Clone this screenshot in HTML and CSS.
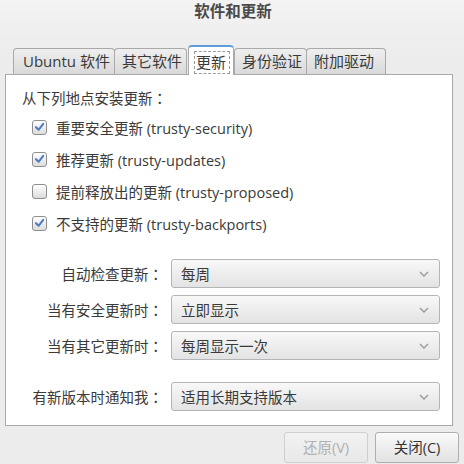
FILE: index.html
```html
<!DOCTYPE html>
<html lang="zh">
<head>
<meta charset="utf-8">
<title>软件和更新</title>
<link rel="stylesheet" href="styles.css">
</head>
<body>
<div class="dialog">
  <div class="title">软件和更新</div>
  <div class="tabs">
    <div class="tab t1">Ubuntu 软件</div>
    <div class="tab t2">其它软件</div>
    <div class="tab active"><span class="focus">更新</span></div>
    <div class="tab t4">身份验证</div>
    <div class="tab t5">附加驱动</div>
  </div>
  <div class="panel">
    <div class="heading">从下列地点安装更新<span class="colon" lang="zh-TW">：</span></div>
    <ul class="checks">
      <li><span class="cb"><svg viewBox="0 0 14 14" width="14" height="14"><path d="M3.2 7.2 L6 10 L11 3.6" fill="none" stroke="#4a7cc4" stroke-width="2.2" stroke-linecap="round" stroke-linejoin="round"/></svg></span>重要安全更新 (trusty-security)</li>
      <li><span class="cb"><svg viewBox="0 0 14 14" width="14" height="14"><path d="M3.2 7.2 L6 10 L11 3.6" fill="none" stroke="#4a7cc4" stroke-width="2.2" stroke-linecap="round" stroke-linejoin="round"/></svg></span>推荐更新 (trusty-updates)</li>
      <li><span class="cb"></span>提前释放出的更新 (trusty-proposed)</li>
      <li><span class="cb"><svg viewBox="0 0 14 14" width="14" height="14"><path d="M3.2 7.2 L6 10 L11 3.6" fill="none" stroke="#4a7cc4" stroke-width="2.2" stroke-linecap="round" stroke-linejoin="round"/></svg></span>不支持的更新 (trusty-backports)</li>
    </ul>
    <div class="form">
      <div class="label">自动检查更新<span class="colon" lang="zh-TW">：</span></div>
      <div class="combo"><span>每周</span><svg class="chev" viewBox="0 0 10 6" width="10" height="6"><path d="M1 1 L5 5 L9 1" fill="none" stroke="#9a9a9a" stroke-width="1.4"/></svg></div>
      <div class="label">当有安全更新时<span class="colon" lang="zh-TW">：</span></div>
      <div class="combo"><span>立即显示</span><svg class="chev" viewBox="0 0 10 6" width="10" height="6"><path d="M1 1 L5 5 L9 1" fill="none" stroke="#9a9a9a" stroke-width="1.4"/></svg></div>
      <div class="label">当有其它更新时<span class="colon" lang="zh-TW">：</span></div>
      <div class="combo"><span>每周显示一次</span><svg class="chev" viewBox="0 0 10 6" width="10" height="6"><path d="M1 1 L5 5 L9 1" fill="none" stroke="#9a9a9a" stroke-width="1.4"/></svg></div>
      <div class="label sep">有新版本时通知我<span class="colon" lang="zh-TW">：</span></div>
      <div class="combo sep"><span>适用长期支持版本</span><svg class="chev" viewBox="0 0 10 6" width="10" height="6"><path d="M1 1 L5 5 L9 1" fill="none" stroke="#9a9a9a" stroke-width="1.4"/></svg></div>
    </div>
  </div>
  <div class="buttons">
    <div class="btn disabled">还原(V)</div>
    <div class="btn">关闭(C)</div>
  </div>
</div>
</body>
</html>
```
FILE: styles.css
```css
* { box-sizing: border-box; }
html, body { margin: 0; padding: 0; }
body {
  width: 464px;
  height: 464px;
  overflow: hidden;
  background: #ececec;
  font-family: "Open Sans", "Noto Sans CJK SC", sans-serif;
  font-size: 14.5px;
  color: #3a3a3a;
}
.dialog {
  height: 464px;
  background: linear-gradient(#f3f3f3 0px, #ececec 60px, #ececec 100%);
  display: flex;
  flex-direction: column;
}
.title {
  height: 23px;
  line-height: 22px;
  text-align: center;
  font-weight: bold;
  font-size: 15.5px;
  color: #4a4a4a;
  padding-left: 2px;
}
.colon {
  font-family: "Noto Sans CJK TC", sans-serif;
}
.tabs {
  margin-top: 22px;
  height: 30px;
  display: flex;
  align-items: flex-end;
  padding-left: 13px;
  position: relative;
  z-index: 2;
  margin-bottom: -1px;
}
.tab {
  height: 26px;
  margin-bottom: 1px;
  line-height: 24px;
  padding: 0 9px;
  border: 1px solid #a9a9a9;
  border-bottom: none;
  border-radius: 4px 4px 0 0;
  background: linear-gradient(#efefef, #d9d9d9);
  color: #3a3a3a;
  white-space: nowrap;
  font-size: 15px;
}
.tab.t1 { width: 102px; padding-left: 9px; }
.tab.t2 { width: 73px; margin-left: -1px; padding-left: 7px; }
.tab.t4 { width: 73px; padding-left: 7px; }
.tab.t5 { width: 80px; margin-left: -1px; padding-left: 7px; }
.tab.active {
  height: 30px;
  margin-bottom: 0;
  width: 46px;
  margin-left: 1px;
  padding: 4px 3px 1px 5px;
  background: #ffffff;
  border-color: #a9a9a9;
  border-top: 2px solid #5f9bd8;
  border-radius: 4px 4px 0 0;
}
.focus {
  display: block;
  height: 23px;
  line-height: 21px;
  padding: 0 1px;
  border: 1px dashed #9a9a9a;
}
.panel {
  margin: 0 11px 0 5px;
  height: 352px;
  background: #ffffff;
  border: 1px solid #a9a9a9;
  padding: 13px 12px 0 16px;
  position: relative;
  z-index: 1;
}
.heading {
  height: 20px;
  line-height: 20px;
}
.checks {
  list-style: none;
  margin: 3px 0 0 0;
  padding: 0 0 0 10px;
}
.checks li {
  height: 32px;
  display: flex;
  align-items: center;
  white-space: nowrap;
}
.cb {
  width: 15px;
  height: 15px;
  margin-right: 9px;
  border: 1px solid #8e8e8e;
  border-radius: 3px;
  background: linear-gradient(#ffffff, #dcdcdc);
  display: flex;
  align-items: center;
  justify-content: center;
  flex: none;
}
.cb svg { display: block; margin-top: -1px; }
.form {
  margin-top: 20px;
  display: grid;
  grid-template-columns: 141px 1fr;
  column-gap: 8px;
  row-gap: 7px;
}
.label {
  height: 29px;
  line-height: 29px;
  text-align: right;
  white-space: nowrap;
}
.combo {
  height: 29px;
  border: 1px solid #b5b5b5;
  border-radius: 3px;
  background: linear-gradient(#f8f8f8, #e3e3e3);
  display: flex;
  align-items: center;
  justify-content: space-between;
  padding: 0 10px 0 9px;
}
.chev { display: block; }
.sep { margin-top: 15px; }
.buttons {
  margin-top: 6px;
  display: flex;
  justify-content: flex-end;
  gap: 7px;
  padding-right: 5px;
}
.btn {
  width: 84px;
  height: 31px;
  line-height: 29px;
  text-align: center;
  border: 1px solid #aeaeae;
  border-radius: 3px;
  background: linear-gradient(#fafafa, #e2e2e2);
  color: #333333;
}
.btn.disabled {
  color: #b0b0b0;
  border-color: #cfcfcf;
  background: linear-gradient(#f2f2f2, #e8e8e8);
}
```
